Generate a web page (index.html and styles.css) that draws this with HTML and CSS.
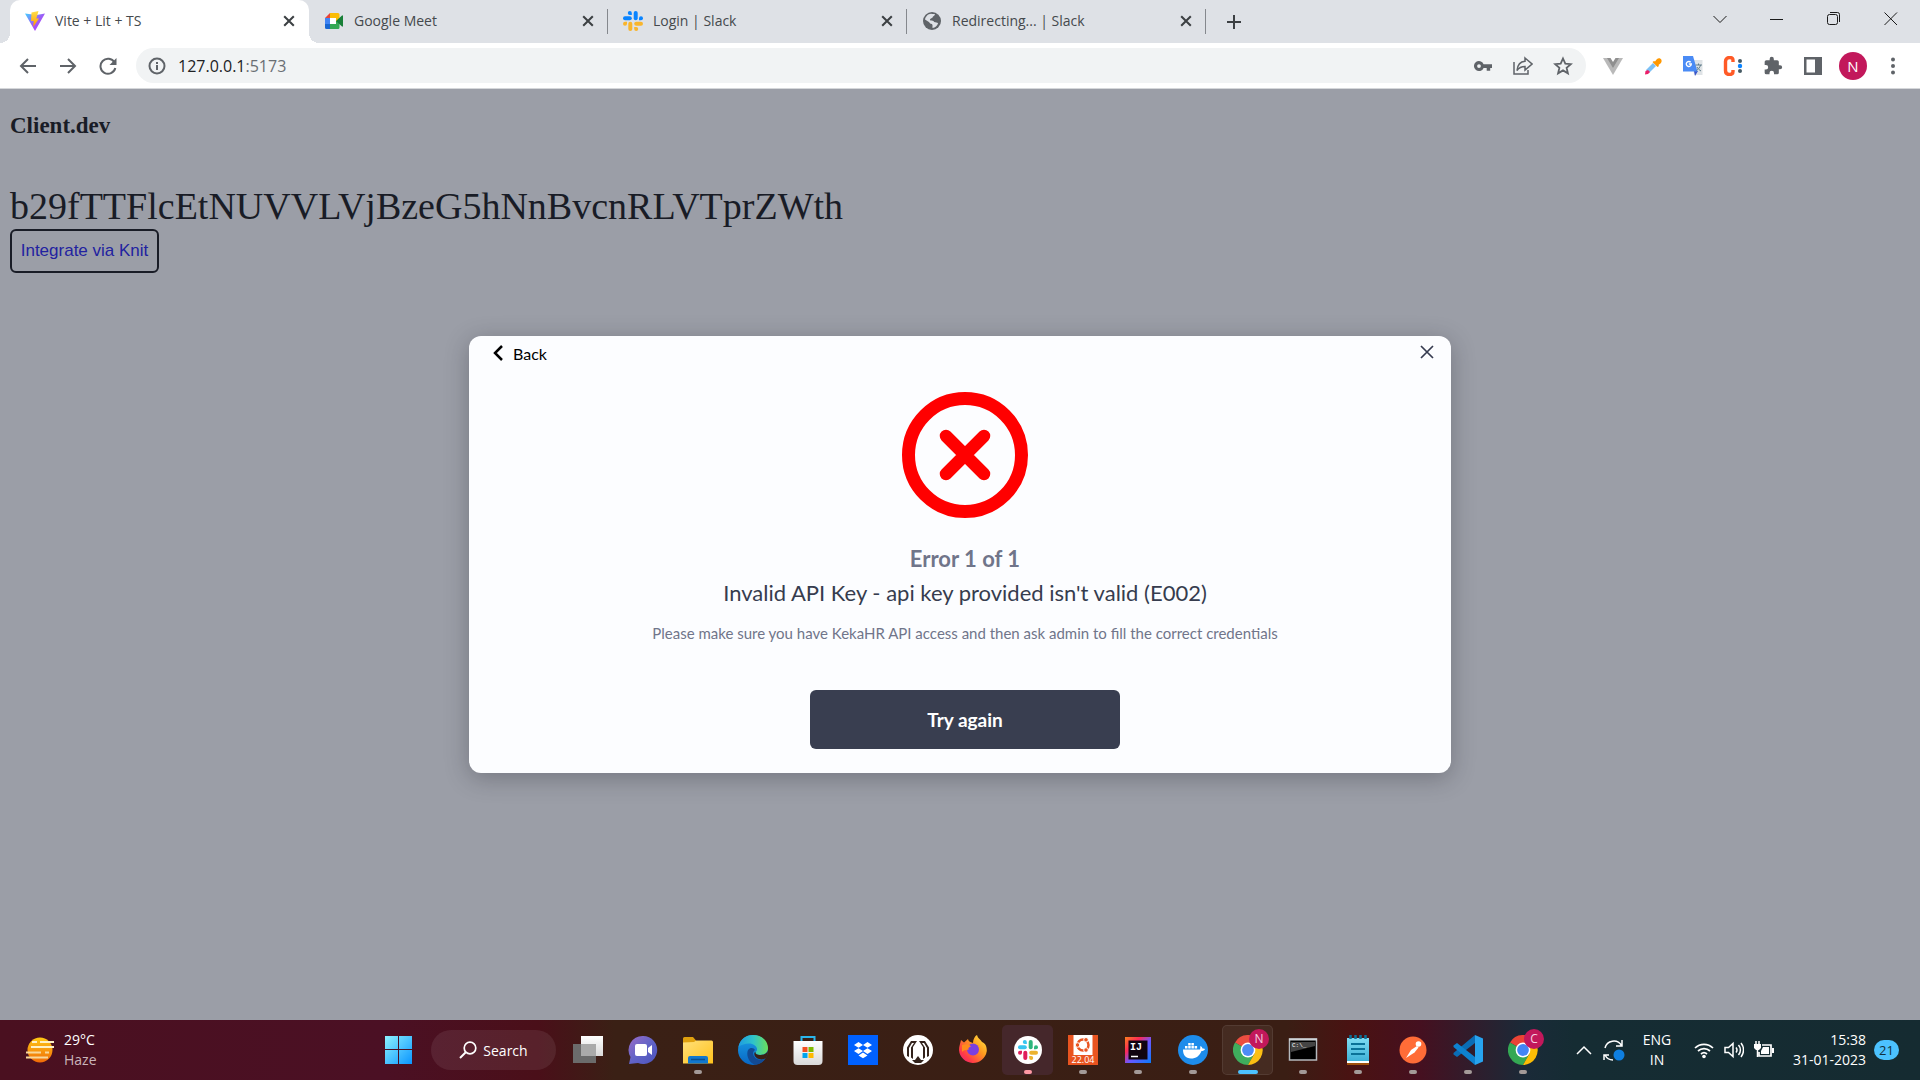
FILE: index.html
```html
<!DOCTYPE html>
<html lang="en">
<head>
<meta charset="utf-8">
<title>Vite + Lit + TS</title>
<link rel="stylesheet" href="styles.css">
</head>
<body>
<svg class="defs" width="0" height="0" aria-hidden="true">
  <defs>
    <linearGradient id="sky" x1="0" y1="0" x2="1" y2="1"><stop offset="0" stop-color="#8df3ff"/><stop offset="1" stop-color="#0a95ff"/></linearGradient>
    <linearGradient id="sun" x1="0" y1="0" x2="0" y2="1"><stop offset="0" stop-color="#ffc814"/><stop offset="1" stop-color="#f06a08"/></linearGradient>
    <linearGradient id="vite" x1="0" y1="0" x2="1" y2="1"><stop offset="0" stop-color="#41d1ff"/><stop offset=".5" stop-color="#9d5cf6"/><stop offset="1" stop-color="#bd34fe"/></linearGradient>
    <linearGradient id="bolt" x1="0" y1="0" x2="0" y2="1"><stop offset="0" stop-color="#ffe04a"/><stop offset="1" stop-color="#ff9a00"/></linearGradient>
    <linearGradient id="chat" x1="0" y1="0" x2="1" y2="1"><stop offset="0" stop-color="#9a6bc8"/><stop offset=".5" stop-color="#6264c7"/><stop offset="1" stop-color="#4b53bc"/></linearGradient>
    <linearGradient id="folder" x1="0" y1="0" x2="1" y2="1"><stop offset="0" stop-color="#ffe07a"/><stop offset="1" stop-color="#ffc21c"/></linearGradient>
    <linearGradient id="edgeTop" x1="0" y1="0" x2="1" y2="0"><stop offset="0" stop-color="#1e9be2"/><stop offset=".5" stop-color="#2fc4c9"/><stop offset="1" stop-color="#6be05a"/></linearGradient>
    <linearGradient id="edgeLow" x1="0" y1="0" x2="0" y2="1"><stop offset="0" stop-color="#1ba0e6"/><stop offset="1" stop-color="#0866c4"/></linearGradient>
    <linearGradient id="fox" x1="1" y1="0" x2="0" y2="1"><stop offset="0" stop-color="#fff04a"/><stop offset=".4" stop-color="#ff9a1e"/><stop offset=".75" stop-color="#ff3b47"/><stop offset="1" stop-color="#e31587"/></linearGradient>
    <linearGradient id="paper" x1="0" y1="0" x2="0" y2="1"><stop offset="0" stop-color="#ffffff"/><stop offset="1" stop-color="#d9d9d9"/></linearGradient>
    <linearGradient id="idea" x1="0" y1="0" x2="1" y2="1"><stop offset="0" stop-color="#fc801d"/><stop offset=".3" stop-color="#fe2857"/><stop offset=".55" stop-color="#6b57ff"/><stop offset="1" stop-color="#087cfa"/></linearGradient>
    <linearGradient id="note" x1="0" y1="0" x2="0" y2="1"><stop offset="0" stop-color="#7fdcf2"/><stop offset="1" stop-color="#3fb2d8"/></linearGradient>
    <symbol id="close" viewBox="0 0 10 10"><path d="M1 1l8 8M9 1l-8 8" stroke="#3c4043" stroke-width="1.700" fill="none"/></symbol>
    <symbol id="chrome" viewBox="0 0 30 30">
      <path d="M15 15L2 7.500A15 15 0 0 1 28 7.500L15 8z" fill="#ea4335"/>
      <path d="M15 15L2 7.500A15 15 0 0 0 15 30L21.500 18.500z" fill="#34a853"/>
      <path d="M15 8H28A15 15 0 0 1 15 30L21.500 18.500z" fill="#fbbc05"/>
      <circle cx="15" cy="15" r="7.400" fill="#fff"/><circle cx="15" cy="15" r="5.900" fill="#4285f4"/>
    </symbol>
    <symbol id="slack" viewBox="0 0 20 20">
      <g class="s-a"><rect x="0" y="5.300" width="8.800" height="4" rx="2"/><path d="M8.800 4H6.800A2 2 0 1 1 8.800 2z"/></g>
      <g class="s-b"><rect x="10.700" y="0" width="4" height="9.300" rx="2"/><path d="M16 9.300V7.300a2 2 0 1 1 2 2z"/></g>
      <g class="s-c"><rect x="11.200" y="10.700" width="8.800" height="4" rx="2"/><path d="M11.200 16h2a2 2 0 1 1-2 2z"/></g>
      <g class="s-d"><rect x="5.300" y="10.700" width="4" height="9.300" rx="2"/><path d="M4 10.700v2a2 2 0 1 1-2-2z"/></g>
    </symbol>
  </defs>
</svg>

<header class="browser">
  <div class="tabstrip">
    <div class="tabs">
      <div class="tab active">
        <svg class="fav" viewBox="0 0 20 20"><path d="M0 2.500L10 20 20 2.500l-8.500 1.500z" fill="url(#vite)"/><path d="M13.500 0L6.500 1.500 6 10h2.700L8.200 16 14 7.500h-2.700z" fill="url(#bolt)"/></svg>
        <span class="title">Vite + Lit + TS</span>
        <button class="x" aria-label="Close tab"><svg viewBox="0 0 10 10"><use href="#close"/></svg></button>
      </div>
      <div class="tab">
        <svg class="fav" viewBox="0 0 20 20"><path d="M1 7h5v7H1z" fill="#4285f4"/><path d="M1 7l5-5v5z" fill="#ea4335"/><path d="M6 2h8a1.500 1.500 0 0 1 1.500 1.500V10H12V7H6z" fill="#fbbc04"/><path d="M1 13h5v5H2.500A1.500 1.500 0 0 1 1 16.500z" fill="#1967d2"/><path d="M6 13h6V10h3.500v6.500A1.500 1.500 0 0 1 14 18H6z" fill="#34a853"/><path d="M12 10l6-5.500a.6.6 0 0 1 1 .5v10a.6.6 0 0 1-1 .5z" fill="#188038"/><path d="M6 7h6v6H6z" fill="#fff"/></svg>
        <span class="title">Google Meet</span>
        <button class="x" aria-label="Close tab"><svg viewBox="0 0 10 10"><use href="#close"/></svg></button>
      </div>
      <div class="tab">
        <svg class="fav slack-duo" viewBox="0 0 20 20"><use href="#slack"/></svg>
        <span class="title">Login | Slack</span>
        <button class="x" aria-label="Close tab"><svg viewBox="0 0 10 10"><use href="#close"/></svg></button>
      </div>
      <div class="tab">
        <svg class="fav" viewBox="0 0 20 20"><circle cx="10" cy="10" r="9" fill="#5f6368"/><path d="M9 2.800c2 .4 3.200 0 4 .4-.2 1.800-2.200 1.600-2.400 3.300-.9 1-2.500.8-2.700 2.200.3 1.400 3.600.2 4.200 2.200 1.500.3 3.200.4 4 1.400-.9 2.500-2.900 4.300-5.500 4.700-.5-1.500.6-2.900-.7-4-1.600-.1-2-1.100-3-2.100L3 8.500C3.600 5.500 6 3 9 2.800z" fill="#dee1e6"/></svg>
        <span class="title">Redirecting... | Slack</span>
        <button class="x" aria-label="Close tab"><svg viewBox="0 0 10 10"><use href="#close"/></svg></button>
      </div>
    </div>
    <button class="newtab" aria-label="New tab"><svg width="14" height="14" viewBox="0 0 14 14"><path d="M7 0v14M0 7h14" stroke="#3c4043" stroke-width="2"/></svg></button>
    <div class="winctl">
      <button aria-label="Search tabs"><svg width="14" height="14" viewBox="0 0 14 14"><path d="M.5 4L7 10.500 13.500 4"/></svg></button>
      <button aria-label="Minimize"><svg width="14" height="14" viewBox="0 0 14 14"><path d="M0 7.500h13"/></svg></button>
      <button aria-label="Restore"><svg width="14" height="14" viewBox="0 0 14 14"><rect x=".5" y="2.500" width="10" height="10" rx="2"/><path d="M3 .5h7.500a2 2 0 0 1 2 2V10"/></svg></button>
      <button aria-label="Close"><svg width="14" height="14" viewBox="0 0 14 14"><path d="M.5.5l12.500 12.500M13 .5L.5 13"/></svg></button>
    </div>
  </div>
  <div class="toolbar">
    <button class="nav" aria-label="Back"><svg width="18" height="18" viewBox="0 0 18 18"><path d="M17 9H2M9 2L2 9l7 7"/></svg></button>
    <button class="nav" aria-label="Forward"><svg width="18" height="18" viewBox="0 0 18 18"><path d="M1 9h15M9 2l7 7-7 7"/></svg></button>
    <button class="nav" aria-label="Reload"><svg width="18" height="18" viewBox="0 0 18 18"><path d="M15.500 5.500A7.500 7.500 0 1 0 16.300 11"/><path d="M17.500 1v7h-7z" fill="#5f6368" stroke="none"/></svg></button>
    <div class="omnibox">
      <svg width="18" height="18" viewBox="0 0 18 18"><circle cx="9" cy="9" r="7.500" fill="none" stroke="#5f6368" stroke-width="2"/><path d="M8 8h2v5H8zM8 5h2v2H8z" fill="#5f6368"/></svg>
      <span class="url">127.0.0.1<span class="port">:5173</span></span>
      <button aria-label="Passwords"><svg width="20" height="20" viewBox="0 0 20 20"><path fill-rule="evenodd" d="M10.600 8.300H19v3.600h-1.800v2.900h-3.500v-2.900h-3.100a5 5 0 1 1 0-3.600zM6 8.200a1.900 1.900 0 1 0 0 3.800 1.900 1.900 0 0 0 0-3.800z" fill="#5f6368"/></svg></button>
      <button aria-label="Share"><svg width="20" height="20" viewBox="0 0 20 20"><path d="M1 6v12h14v-4M12 2l7 6-7 6v-3.500c-4 0-6 1-8 4C4.500 9 7 5.700 12 5.300z" fill="none" stroke="#5f6368" stroke-width="1.500"/></svg></button>
      <button aria-label="Bookmark"><svg width="20" height="20" viewBox="0 0 20 20"><path d="M10 2.500l2.300 5.100 5.500.5-4.200 3.700 1.300 5.500L10 14.400l-4.900 2.900 1.300-5.500L2.200 8.100l5.500-.5z" fill="none" stroke="#5f6368" stroke-width="1.800"/></svg></button>
    </div>
    <div class="exts">
      <button aria-label="Vue devtools"><svg width="20" height="20" viewBox="0 0 20 20"><path d="M0 2h20L10 19z" fill="#b9b9b9"/><path d="M4 2h4l2 3.500L12 2h4L10 12z" fill="#8f8f8f"/><path d="M7.500 2h5L10 6z" fill="#fff"/></svg></button>
      <button aria-label="Color picker"><svg width="20" height="20" viewBox="0 0 20 20"><path d="M10 7l3 3-6.500 6.500-3.500.500.500-3.500z" fill="#7cc0f5"/><path d="M5 14l2 2-2 2-3 .500L2.500 15z" fill="#ec1e68"/><path d="M9.500 6l1.500-1 1 .500 2-2.500c3-2 6 1 4 4l-2.500 2 .500 1L14.500 11z" fill="#ff9800"/></svg></button>
      <button aria-label="Translate"><svg width="22" height="22" viewBox="0 0 22 22"><path d="M10 5h10.500v15H12z" fill="#dfe3e6"/><path d="M12 16h4l-3 5z" fill="#3a55c8"/><path d="M1 1h10l4.500 15.500H1z" fill="#4a8bf5"/><path d="M13.500 10h6.500M16.500 8.500V10M18.500 10c-.5 2.500-2.500 4.500-4 5.500M15 12c1 2 2.500 3 4 4" stroke="#607d8b" fill="none"/><path d="M8.700 7.300A2.500 2.500 0 1 0 9.300 9H6.800" stroke="#fff" stroke-width="1.400" fill="none"/></svg></button>
      <button aria-label="Commit tools"><svg width="20" height="20" viewBox="0 0 20 20"><path d="M10 6V4.500C10 2 8.500 1.500 6.500 1.500S2.500 3 2.500 5.500v9c0 2.500 1.500 4 4 4s3.500-1 3.500-3V14" fill="none" stroke="#ff5a26" stroke-width="3.400"/><circle cx="17" cy="5" r="2" fill="#455a64"/><circle cx="17" cy="10" r="2.200" fill="#0a84ff"/><circle cx="17" cy="15" r="2" fill="#455a64"/></svg></button>
      <button aria-label="Extensions"><svg width="20" height="20" viewBox="0 0 24 24"><path d="M20.500 11H19V7a2 2 0 0 0-2-2h-4V3.500a2.500 2.500 0 0 0-5 0V5H4a2 2 0 0 0-2 2v3.800h1.500a2.700 2.700 0 0 1 0 5.400H2V20a2 2 0 0 0 2 2h3.800v-1.500a2.700 2.700 0 0 1 5.400 0V22H17a2 2 0 0 0 2-2v-4h1.500a2.500 2.500 0 0 0 0-5z" fill="#5f6368"/></svg></button>
      <button aria-label="Side panel"><svg width="20" height="20" viewBox="0 0 20 20"><path fill-rule="evenodd" d="M1 1h18v18H1zM3.500 3.500v13h8.500v-13z" fill="#5f6368"/></svg></button>
      <button aria-label="Profile"><span class="avatar">N</span></button>
      <button aria-label="Menu"><svg width="20" height="20" viewBox="0 0 20 20" fill="#5f6368"><circle cx="10" cy="3.500" r="2"/><circle cx="10" cy="10" r="2"/><circle cx="10" cy="16.500" r="2"/></svg></button>
    </div>
  </div>
</header>

<main class="page">
  <div class="content">
    <h3>Client.dev</h3>
    <div class="token">b29fTTFlcEtNUVVLVjBzeG5hNnBvcnRLVTprZWth</div>
    <button class="integrate">Integrate via Knit</button>
  </div>
  <div class="overlay">
    <section class="modal" role="dialog" aria-label="Integration error">
      <div class="modal-head">
        <button class="back"><svg width="10" height="16" viewBox="0 0 10 16"><path d="M9 1L2 8l7 7" fill="none" stroke="#000" stroke-width="2.500"/></svg>Back</button>
        <button class="dismiss" aria-label="Close dialog"><svg width="14" height="14" viewBox="0 0 14 14"><path d="M1 1l12 12M13 1L1 13" stroke="#363c50" stroke-width="1.700"/></svg></button>
      </div>
      <div class="modal-body">
        <svg width="126" height="126" viewBox="0 0 126 126" fill="none" stroke="#f00"><circle cx="63" cy="63" r="56.500" stroke-width="13"/><path d="M44 44l38 38M82 44L44 82" stroke-width="12.500" stroke-linecap="round"/></svg>
        <h4>Error 1 of 1</h4>
        <p class="msg">Invalid API Key - api key provided isn't valid (E002)</p>
        <p class="hint">Please make sure you have KekaHR API access and then ask admin to fill the correct credentials</p>
        <button class="retry">Try again</button>
      </div>
    </section>
  </div>
</main>

<footer class="taskbar">
  <div class="weather">
    <svg width="30" height="30" viewBox="0 0 30 30"><circle cx="15" cy="15" r="12.500" fill="url(#sun)"/><path d="M7 7h5M15 7h14M6 12h23" stroke="#fff1c4" stroke-width="2"/><path d="M1 17.500h15M20 17.500h4M1 22.500h22" stroke="#f8d79a" stroke-width="2"/></svg>
    <div><div>29°C</div><div class="dim">Haze</div></div>
  </div>
  <div class="apps">
    <button class="start" aria-label="Start"><svg width="30" height="30" viewBox="0 0 30 30"><path d="M1 1h13v13H1zM15 1h13v13H15zM1 15h13v14H1zM15 15h13v14H15z" fill="url(#sky)"/></svg></button>
    <button class="search"><svg width="18" height="18" viewBox="0 0 18 18"><circle cx="11" cy="7" r="5.800" fill="none" stroke="#fff" stroke-width="1.700"/><path d="M7 11l-6 6" stroke="#fff" stroke-width="2"/></svg>Search</button>
    <button class="app" aria-label="Task view"><svg viewBox="0 0 30 30"><path d="M8 1h22v20H8z" fill="url(#paper)"/><path d="M0 9h23v19H0z" fill="#6b6b6b"/><path d="M8 9h15v12H8z" fill="#aaa"/></svg></button>
    <button class="app" aria-label="Chat"><svg viewBox="0 0 30 30"><path d="M15 1a14 14 0 1 1-5 27L1 29l1.500-7A14 14 0 0 1 15 1z" fill="url(#chat)"/><rect x="7" y="9" width="12" height="12" rx="2" fill="#fff"/><path d="M20 13l4-3v10l-4-3z" fill="#fff"/></svg></button>
    <button class="app run" aria-label="File Explorer"><svg viewBox="0 0 30 30"><path d="M0 3.500A1.500 1.500 0 0 1 1.500 2H10l3 3.500V10H0z" fill="#dfa00e"/><path d="M0 7.500L11 7l2-1.500h15.500A1.500 1.500 0 0 1 30 7v21.500H0z" fill="url(#folder)"/><path d="M5 28.500V23a2 2 0 0 1 2-2h16a2 2 0 0 1 2 2v5.500z" fill="#1178ce"/><path d="M8 24.500h14" stroke="#0a4f8f" stroke-width="1.500"/></svg></button>
    <button class="app" aria-label="Edge"><svg viewBox="0 0 30 30"><circle cx="15" cy="15" r="15" fill="url(#edgeLow)"/><path d="M.5 12C2 4 8 0 15 0c9 0 15 6 15 13 0 5-4 7-8 7-3 0-5-1.500-4.500-3 1.500-1 1.500-2 1.500-3 0-3-4-5.500-8-5.500C7 8.500 3 10 .5 12z" fill="url(#edgeTop)"/><path d="M10 15c-2.500 6 2 14 8 14.700 4-.7 7.500-3 9.500-6.200-3.500 2-9 1.500-11-1.500-2-2.500-2-5 .5-7-1-2.500-5-3-7 0z" fill="#124a94"/><path d="M29.800 14.500V19c-.5 2-1.200 3.300-2.300 4.500-4 2-10 .5-11-3.500-.5-2 .2-3 1-3-.5 1.500 1.500 3 4.500 3 4 0 7.500-1.500 7.800-5.500z" fill="#3a2015"/></svg></button>
    <button class="app" aria-label="Microsoft Store"><svg viewBox="0 0 30 30"><path d="M8.500 6V2h13v4" fill="none" stroke="#2ab6ec" stroke-width="2"/><path d="M.5 6h29v20a4 4 0 0 1-4 4h-21a4 4 0 0 1-4-4z" fill="url(#paper)"/><path d="M9.500 12h5v5h-5z" fill="#f25022"/><path d="M15.500 12h5v5h-5z" fill="#7fba00"/><path d="M9.500 18h5v5h-5z" fill="#00a4ef"/><path d="M15.500 18h5v5h-5z" fill="#ffb900"/></svg></button>
    <button class="app" aria-label="Dropbox"><svg viewBox="0 0 30 30"><path d="M0 0h30v30H0z" fill="#0061ff"/><path d="M10.500 7L15 9.900l-4.500 2.900L6 9.900zM19.500 7L24 9.900l-4.500 2.900L15 9.900zM10.500 13.200l4.500 2.900-4.500 2.900L6 16.100zM19.500 13.200l4.500 2.900-4.500 2.900-4.500-2.900zM15 17.500l4.500 2.900L15 23.300l-4.500-2.900z" fill="#fff"/></svg></button>
    <button class="app" aria-label="Launcher"><svg viewBox="0 0 30 30"><circle cx="15" cy="15" r="15" fill="#fff"/><g fill="#33231c"><path d="M4 21V12.500L8 6h6L10 12v12l-2-1.500V12.500L11 8H9l-3 5v9z"/><path d="M26 21V12.500L22 6h-6l4 6v12l2-1.500V12.500L19 8h2l3 5v9z"/><path d="M9 25h3l3-4 3 4h3l-3 3h-6z"/></g></svg></button>
    <button class="app" aria-label="Firefox"><svg viewBox="0 0 30 30"><path d="M1 15C1 11 2.500 8 3 5l3 2.500 4-3.500c0 2 2 3 5 4 0-4 2-7 4-8 1 4 4 4.500 5 7 3 1 5 4 4.800 9A14 14 0 0 1 1 15z" fill="url(#fox)"/><circle cx="15" cy="14.500" r="6" fill="#7a3fe0"/><path d="M4 10c4-1.500 7-1 9 1.500-2 .5-3 1.500-2.500 3.500-1.500-.5-5 0-6.500 2z" fill="#ff8b1c"/></svg></button>
    <button class="app run alert" aria-label="Slack"><svg viewBox="0 0 30 30"><circle cx="15" cy="15" r="14" fill="#fff"/><svg class="slack-full" x="5" y="5" width="20" height="20" viewBox="0 0 20 20"><use href="#slack"/></svg></svg></button>
    <button class="app run" aria-label="Ubuntu 22.04"><svg viewBox="0 0 30 30"><path d="M0 0h30v30H0z" fill="#e95420"/><path d="M5.500 0h19v20h-19z" fill="#fff"/><circle cx="15" cy="10" r="5.500" fill="none" stroke="#e95420" stroke-width="2.500"/><g fill="#e95420" stroke="#fff"><circle cx="9.500" cy="10" r="2.300"/><circle cx="18" cy="4.800" r="2.300"/><circle cx="18" cy="15" r="2.300"/></g><text x="15" y="28" text-anchor="middle" font-size="9" fill="#fff">22.04</text></svg></button>
    <button class="app run" aria-label="IntelliJ IDEA"><svg viewBox="0 0 30 30"><path d="M2 2h26v26H2z" fill="url(#idea)"/><path d="M5.500 5.500h19v19h-19z" fill="#100410"/><text x="7" y="15" class="mono" font-size="10" font-weight="700" fill="#fff">IJ</text><path d="M8 21.500h7" stroke="#fff" stroke-width="1.500"/></svg></button>
    <button class="app run" aria-label="Docker"><svg viewBox="0 0 30 30"><circle cx="15" cy="15" r="15" fill="#1d8ceb"/><path d="M5 14.500h17c.5-1.500 0-2.500.5-3.500 1 .5 1.800 1.500 2 2.500 1-.2 2 0 2.500.5-.5 1.500-2 2-3.500 2-2 5-5.500 7.500-10.500 7.500-5.500 0-8-3.500-8-9z" fill="#fff"/><path d="M7 11h2.500v2.500H7zM10.200 11h2.500v2.500h-2.500zM13.400 11h2.500v2.500h-2.500zM16.600 11h2.500v2.500h-2.500zM10.200 8h2.500v2.500h-2.500zM13.400 8h2.500v2.500h-2.500z" fill="#fff"/></svg></button>
    <button class="app run current" aria-label="Chrome, profile N"><svg viewBox="0 0 30 30"><use href="#chrome"/></svg><span class="badge">N</span></button>
    <button class="app run" aria-label="Command Prompt"><svg viewBox="0 0 30 30"><rect x="1.500" y="4" width="27" height="21" fill="#000" stroke="#b5b9bd" stroke-width="1.500"/><path d="M3 7h24v4L3 17z" fill="#444"/><path d="M1 4.500h28" stroke="#cfd4d8" stroke-width="2"/><text x="4" y="12" class="mono" font-size="6" fill="#fff">C:\_</text></svg></button>
    <button class="app run" aria-label="Notepad"><svg viewBox="0 0 30 30"><path d="M4 26h22v4H4z" fill="#a0500c"/><path d="M4 25h22v3H4z" fill="#fff"/><path d="M4 3h22v23H4z" fill="url(#note)"/><path d="M7.500 0v4M12.500 0v4M17.500 0v4M22.500 0v4" stroke="#0b7298" stroke-width="2.500"/><path d="M8 9h14M8 14h14M8 19h14" stroke="#0b7298" stroke-width="2"/></svg></button>
    <button class="app run" aria-label="Postman"><svg viewBox="0 0 30 30"><circle cx="15" cy="15" r="13.500" fill="#ff6c37"/><path d="M8 23l5-8 6-4 1.500 1.500-4 5z" fill="#fff"/><circle cx="20.500" cy="9" r="2.800" fill="#fff"/></svg></button>
    <button class="app run" aria-label="VS Code"><svg viewBox="0 0 30 30"><path d="M22 0v8L4 22l-3.500-2.500V18z" fill="#0a6cb5"/><path d="M.5 10.500L4 8l18 14v8L.5 12z" fill="#0d82d0"/><path d="M22 0l8 3.500v23L22 30z" fill="#27a3ee"/></svg></button>
    <button class="app run" aria-label="Chrome, profile C"><svg viewBox="0 0 30 30"><use href="#chrome"/></svg><span class="badge">C</span></button>
  </div>
  <div class="tray">
    <svg width="16" height="16" viewBox="0 0 16 16"><path d="M1 12l7-7 7 7"/></svg>
    <svg width="22" height="22" viewBox="0 0 22 22"><path d="M2 9a9 9 0 0 1 16.500-2.500M19 1v6h-6M1 21v-5h5M2 16c1.500 3 4 5 8 5"/><circle cx="16" cy="16" r="5.500" fill="#0f7fe0" stroke="none"/></svg>
    <div class="lang">ENG<br>IN</div>
    <div class="status">
      <svg width="20" height="18" viewBox="0 0 20 18"><path d="M1 7a13 13 0 0 1 18 0M4 10a9 9 0 0 1 12 0M7 13a4.500 4.500 0 0 1 6 0" stroke-width="1.700"/><circle cx="10" cy="15.500" r="1.800" fill="#fff" stroke="none"/></svg>
      <svg width="20" height="18" viewBox="0 0 20 18"><path d="M1 6.500h3.500L9 2.500v13l-4.500-4H1zM12 6.500a4 4 0 0 1 0 5M14.500 4a7.500 7.500 0 0 1 0 10M17 2a11 11 0 0 1 0 14"/></svg>
      <svg width="20" height="18" viewBox="0 0 20 18"><path d="M8 4h9v11H5v-4" stroke-width="1.700"/><path d="M9 6h6v7H7v-3zM18 7h2v5h-2zM0 3h7v4L5 9H2L0 7z" fill="#fff" stroke="none"/><path d="M2 0v3M5 0v3M3.500 8v8"/></svg>
    </div>
    <div class="clock">15:38<br>31-01-2023</div>
    <span class="count">21</span>
  </div>
</footer>
</body>
</html>
```
FILE: styles.css
```css
* { box-sizing: border-box; }
body {
  margin: 0;
  min-height: 100vh;
  display: flex;
  flex-direction: column;
  font-family: "Open Sans", "Noto Sans", sans-serif;
  font-size: 14px;
}
button {
  border: 0;
  padding: 0;
  margin: 0;
  background: none;
  font: inherit;
  color: inherit;
  display: flex;
  align-items: center;
  justify-content: center;
}
svg { display: block; flex: none; }
.defs { position: absolute; }

/* Browser chrome */
.browser { border-bottom: 1px solid #d5d7da; background: #fff; }
.tabstrip {
  display: flex;
  height: 43px;
  background: #dee1e6;
  padding-left: 10px;
}
.tabs { display: flex; flex: 0 1 1196px; min-width: 0; }
.tab {
  flex: 1 1 0;
  min-width: 0;
  display: flex;
  align-items: center;
  gap: 10px;
  padding: 0 14px 2px 15px;
  color: #45494d;
  position: relative;
}
.tab:not(.active)::after {
  content: "";
  position: absolute;
  right: 0;
  top: 9px;
  height: 25px;
  width: 1px;
  background: #85888d;
}
.tab.active { background: #fff; border-radius: 10px 10px 0 0; }
.tab.active::before, .tab.active::after {
  content: "";
  position: absolute;
  bottom: 0;
  width: 10px;
  height: 10px;
}
.tab.active::before { left: -10px; background: radial-gradient(circle at 0 0, transparent 10px, #fff 10px); }
.tab.active::after { right: -10px; background: radial-gradient(circle at 100% 0, transparent 10px, #fff 10px); }
.fav { width: 20px; height: 20px; }
.title { flex: 1; min-width: 0; white-space: nowrap; overflow: hidden; }
.x { width: 12px; height: 20px; }
.x svg { width: 12px; height: 12px; }
.newtab { width: 56px; }
.winctl { display: flex; margin-left: auto; padding-right: 1px; }
.winctl button { width: 57px; height: 38px; }
.winctl svg { fill: none; stroke: #1a1a1a; }
.slack-duo { --a: #0a84ff; --b: #0a84ff; --c: #f9b52c; --d: #f9b52c; }
.slack-full { --a: #36c5f0; --b: #2eb67d; --c: #ecb22e; --d: #e01e5a; }
.s-a { fill: var(--a); }
.s-b { fill: var(--b); }
.s-c { fill: var(--c); }
.s-d { fill: var(--d); }

.toolbar {
  display: flex;
  align-items: center;
  height: 45px;
  padding: 0 7px 0 8px;
}
.nav { width: 40px; height: 40px; }
.nav svg { fill: none; stroke: #5f6368; stroke-width: 2; }
.omnibox {
  flex: 1;
  display: flex;
  align-items: center;
  height: 35px;
  margin-left: 8px;
  padding: 0 3px 0 12px;
  border-radius: 18px;
  background: #f1f3f4;
}
.url { flex: 1; margin-left: 12px; font-size: 16px; color: #202124; }
.port { color: #6a6e73; }
.omnibox button { width: 40px; height: 35px; }
.exts { display: flex; margin-left: 7px; }
.exts button { width: 40px; height: 40px; }
.avatar {
  width: 28px;
  height: 28px;
  border-radius: 50%;
  background: #c2185b;
  color: #fff;
  font-size: 15px;
  line-height: 28px;
}

/* Page */
.page { flex: 1; display: grid; background: #9b9ea7; }
.content, .overlay { grid-area: 1 / 1; }
.content {
  padding: 23px 10px;
  font-family: "Liberation Serif", serif;
  color: #191c26;
}
.content h3 { margin: 0; font-size: 23px; line-height: 28px; }
.token { margin-top: 44px; font-size: 38px; line-height: 45px; }
.integrate {
  width: 149px;
  height: 44px;
  border: 2px solid #191c26;
  border-radius: 6px;
  font: 17px "Liberation Sans", sans-serif;
  white-space: nowrap;
  color: #2222a0;
}
.overlay { display: grid; place-items: center; font-family: Lato, sans-serif; }
.modal {
  width: 982px;
  max-width: 100%;
  border-radius: 12px;
  background: #fcfdff;
  box-shadow: 0 5px 24px rgba(25, 28, 38, 0.3);
}
.modal-head {
  display: flex;
  justify-content: space-between;
  padding: 7px 17px 0 24px;
}
.back { gap: 10px; height: 20px; font-size: 16px; color: #000; }
.dismiss { height: 18px; }
.modal-body {
  display: flex;
  flex-direction: column;
  align-items: center;
  padding: 29px 0 24px 10px;
}
.modal-body h4 { margin: 27px 0 0; font-size: 22px; line-height: 28px; color: #70758a; }
.modal-body p { margin: 0; }
.modal-body .msg { margin-top: 3px; font-size: 22px; line-height: 34px; color: #363c4e; }
.modal-body .hint { margin: 13px 0 47px; font-size: 15px; line-height: 20px; color: #70758a; }
.retry {
  width: 310px;
  height: 59px;
  border-radius: 6px;
  background: #393e50;
  color: #fff;
  font-size: 19px;
  font-weight: 700;
}

/* Taskbar */
.taskbar {
  display: grid;
  grid-template-columns: 384px 1fr auto;
  height: 60px;
  color: #fff;
  background: linear-gradient(90deg, #4a1020 0, #4b1024 20%, #4a0f19 28%, #3a2015 32%, #3a1e14 67%, #4a1212 70.500%, #451020 74%, #1a2a38 79.500%, #152c33 82%, #152b31 100%);
}
.weather {
  display: flex;
  align-items: center;
  gap: 9px;
  padding: 0 0 0 25px;
  line-height: 20px;
}
.dim { color: #c9b5ba; }
.apps { display: flex; align-items: center; }
.search {
  width: 125px;
  height: 40px;
  margin: 0 4px 0 17px;
  gap: 6px;
  border-radius: 20px;
  background: rgba(255, 255, 255, 0.08);
}
.start { width: 30px; }
.app {
  width: 55px;
  height: 60px;
  position: relative;
}
.app > svg { width: 30px; height: 30px; }
.app text { font-family: "Open Sans", sans-serif; }
.app .mono { font-family: "Liberation Mono", monospace; }
.run::after {
  content: "";
  position: absolute;
  bottom: 6px;
  width: 8px;
  height: 4px;
  border-radius: 2px;
  background: #a39a98;
}
.alert::before, .current::before {
  content: "";
  position: absolute;
  inset: 5px 2px;
  border-radius: 5px;
  background: #45272b;
}
.current::before { background: rgba(255, 255, 255, 0.06); border: 1px solid rgba(255, 255, 255, 0.08); }
.alert > svg { position: relative; }
.alert::after { background: #ff99a4; }
.current::after { width: 20px; background: #4cc2ff; }
.badge {
  position: absolute;
  top: 9px;
  right: 6px;
  width: 20px;
  height: 20px;
  border-radius: 50%;
  background: #c2185b;
  color: #f6cfe0;
  font-size: 12px;
  line-height: 20px;
}
.tray {
  display: flex;
  align-items: center;
  padding-right: 21px;
  line-height: 20px;
}
.tray svg { fill: none; stroke: #fff; stroke-width: 1.500; }
.tray > svg + svg { margin-left: 11px; }
.lang { margin-left: 16px; width: 32px; text-align: center; }
.status { display: flex; gap: 10px; margin-left: 21px; }
.clock { margin-left: 18px; width: 74px; text-align: right; white-space: nowrap; }
.count {
  margin-left: 8px;
  width: 25px;
  height: 20px;
  border-radius: 10px;
  background: #4cc2ff;
  color: #12303c;
  text-align: center;
  font-size: 13px;
}
```
